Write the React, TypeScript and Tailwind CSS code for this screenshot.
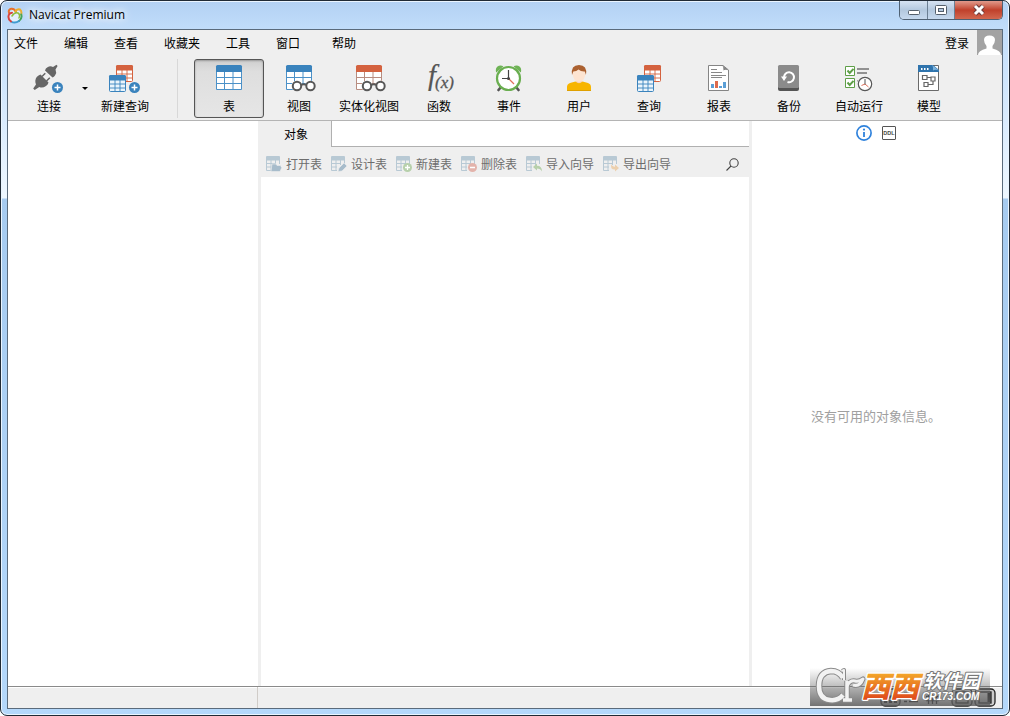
import React from 'react'

type ToolItem = {
    label: string
    icon: React.ReactNode
    active?: boolean
}

const menus = ['文件', '编辑', '查看', '收藏夹', '工具', '窗口', '帮助']

const BLUE = '#3a83bd'
const RED = '#d4623f'

/* ---------- toolbar icons ---------- */

const Icon = ({ children }: { children: React.ReactNode }) => (
    <svg width="32" height="28" viewBox="0 0 32 28" fill="none" aria-hidden="true" className="block overflow-visible">
        {children}
    </svg>
)

const BigTable = ({ color, line }: { color: string; line: string }) => (
    <g>
        <path d="M3.500 2.500V25.500H28.500V2.500Z" fill="#fff" stroke={line} />
        <path d="M11.500 8V26M20 8V26M3 13.500H29M3 19.500H29" stroke={line} />
        <path d="M3 8V2.500Q3 1 4.500 1H27.500Q29 1 29 2.500V8Z" fill={color} />
    </g>
)

const SmallTable = ({ x, y, color, fill = '#fff' }: { x: number; y: number; color: string; fill?: string }) => (
    <g transform={`translate(${x} ${y})`}>
        <rect x="0.500" y="0.500" width="16" height="16" rx="1" fill={fill} stroke={color} />
        <path d="M6 5V17M11 5V17M0 9H17M0 13H17" stroke={color} strokeWidth="0.900" />
        <path d="M0 5.500V1.500Q0 0 1.500 0H15.500Q17 0 17 1.500V5.500Z" fill={color} />
    </g>
)

const PlusBadge = ({ x, y }: { x: number; y: number }) => (
    <g>
        <circle cx={x} cy={y} r="6" fill="#efefef" />
        <circle cx={x} cy={y} r="5.500" fill={BLUE} />
        <path d={`M${x - 3} ${y}H${x + 3}M${x} ${y - 3}V${y + 3}`} stroke="#fff" strokeWidth="1.500" />
    </g>
)

const Glasses = () => (
    <g>
        <path d="M10 20.500H31V26.500H10Z" fill="#efefef" />
        <circle cx="14" cy="22" r="5.500" fill="#efefef" />
        <circle cx="27.500" cy="22" r="5.500" fill="#efefef" />
        <circle cx="14" cy="22" r="4.200" fill="#fff" stroke="#585858" strokeWidth="2" />
        <circle cx="27.500" cy="22" r="4.200" fill="#fff" stroke="#585858" strokeWidth="2" />
        <path d="M18 21Q20.750 19.500 23.500 21" stroke="#585858" strokeWidth="1.800" />
    </g>
)

const ConnectIcon = () => (
    <Icon>
        <g fill="#666">
            <path d="M12 6.500Q12.500 4.300 14.500 3.200Q17.300 1.600 20 3L23.500 0.800L24.600 2L22.500 5.500Q24 8.500 22 11.500Q21 13 19.500 13.500Z" />
            <path d="M3.700 13Q5.500 11 7.500 10.500L15.500 18.500Q15 20.500 13 22Q9.500 24.500 6.300 23L1.700 26L0.200 24.500L3 20.500Q1.300 16.500 3.700 13Z" />
        </g>
        <path d="M9 12.500L12.300 9.200M13.500 17L16.800 13.700" stroke="#666" strokeWidth="1.500" />
        <PlusBadge x={24.5} y={23.5} />
    </Icon>
)

const NewQueryIcon = () => (
    <Icon>
        <SmallTable x={7} y={1} color={RED} />
        <SmallTable x={0} y={11} color={BLUE} fill="#eaf4fb" />
        <PlusBadge x={25.5} y={23.5} />
    </Icon>
)

const FunctionIcon = () => (
    <Icon>
        <g fill="#555" fontFamily="'Liberation Serif', serif" fontStyle="italic">
            <text x="5" y="21" fontSize="29" stroke="#555" strokeWidth="0.200">f</text>
            <text x="12" y="24" fontSize="17" stroke="#555" strokeWidth="0.300">(x)</text>
        </g>
    </Icon>
)

const EventIcon = () => (
    <Icon>
        <path d="M8 23L5.500 26M23 23L25.500 26" stroke="#555" strokeWidth="2.600" strokeLinecap="round" />
        <path d="M3.200 8.500Q2 4.500 4.500 2.500Q7 0.500 10.500 2.200ZM27.800 8.500Q29 4.500 26.500 2.500Q24 0.500 20.500 2.200Z" fill="#6eb355" />
        <circle cx="15.500" cy="14.500" r="11.500" fill="#fff" stroke="#6aae50" strokeWidth="2.200" />
        <path d="M15.500 14.500L21 20" stroke="#e2705a" strokeWidth="1.300" />
        <path d="M15.500 6V14.500H9" stroke="#444" strokeWidth="1.200" />
        <circle cx="15.500" cy="14.500" r="1.500" fill="#444" />
    </Icon>
)

const UserIcon = () => (
    <Icon>
        <path d="M13 14H19V19Q16 22 13 19Z" fill="#f6d3bb" />
        <path d="M4 27V23Q4 20 7 19L12.500 17.500Q16 21 19.500 17.500L25 19Q28 20 28 23V27Z" fill="#f7b500" />
        <path d="M4 26.500H28" stroke="#dfa000" />
        <path d="M9.500 6H22.500V10Q21.500 17.500 16 18Q10.500 17.500 9.500 10Z" fill="#fde4d1" />
        <path d="M9 11Q7.500 1 16 1Q24.500 1 23 11L21.800 7.500Q18 7.800 15.500 5.500Q13.500 7.500 10.300 7.500Z" fill="#ab6130" />
    </Icon>
)

const QueryIcon = () => (
    <Icon>
        <SmallTable x={11} y={1} color={RED} />
        <SmallTable x={4} y={11} color={BLUE} fill="#eaf4fb" />
    </Icon>
)

const ReportIcon = () => (
    <Icon>
        <path d="M5.500 1.500H20L25.500 6V26.500H5.500Z" fill="#fff" stroke="#858585" />
        <path d="M19 1L26 6.500Q22 4.800 20.500 6.500Q21 3 19 1Z" fill="#858585" />
        <path d="M8 5.500H14M8 8.500H19M8 11.500H23M8 13.500H19" stroke="#888" />
        <path d="M8 20H11V24H8ZM20 18H23V24H20ZM16 22H19V24H16Z" fill="#5b9fd6" />
        <path d="M12 17H15V24H12Z" fill="#dc6a4d" />
    </Icon>
)

const BackupIcon = () => (
    <Icon>
        <rect x="5" y="10" width="21" height="17" rx="2" fill="#555" />
        <rect x="5" y="1" width="21" height="23" rx="1.500" fill="#8b8b8b" />
        <path d="M11 13.500A5 5 0 1 1 14.500 18" stroke="#fff" strokeWidth="2" />
        <path d="M8 12.500H14L11 17Z" fill="#fff" />
    </Icon>
)

const AutomationIcon = () => (
    <Icon>
        <path d="M2.500 2.500H11.500V11.500H2.500ZM2.500 14.500H11.500V23.500H2.500Z" fill="#fff" stroke="#5f9f48" />
        <path d="M4.500 6.500L6.700 9L10.500 4.800M4.500 18.500L6.700 21L10.500 16.800" stroke="#5f9f48" strokeWidth="2" />
        <path d="M14 5H26M14 9H24M14 17H18" stroke="#929292" strokeWidth="2" />
        <circle cx="22" cy="20" r="8" fill="#efefef" />
        <circle cx="22" cy="20" r="6.700" fill="#fff" stroke="#585858" strokeWidth="1.200" />
        <path d="M22 20L25.500 23M22 20L18.500 21.500" stroke="#e2705a" />
        <path d="M22 15V20.500" stroke="#555" />
    </Icon>
)

const ModelIcon = () => (
    <Icon>
        <path d="M5.500 1.500H25.500V26.500H5.500Z" fill="#fff" stroke="#6a6a6a" />
        <path d="M5 1H20L26 6V8H5Z" fill="#2f74ad" />
        <path d="M19 1L26 6.500Q22 4.800 20 6.500Q20.800 3 19 1Z" fill="#7db4de" />
        <path d="M8 4H9.500V6H8ZM11 4H12.500V6H11ZM14 4H15.500V6H14Z" fill="#fff" />
        <path d="M9.500 11.500H14V15.500H9.500ZM18 13H22V17H18ZM11 18.500H15V22.500H11Z" stroke="#666" strokeWidth="1.200" />
        <path d="M14 13.500H18M20 17V20.500H15" stroke="#666" strokeWidth="1.200" />
    </Icon>
)

const tools: ToolItem[] = [
    { label: '表', icon: <Icon><BigTable color={BLUE} line="#4b91c8" /></Icon>, active: true },
    { label: '视图', icon: <Icon><BigTable color={BLUE} line="#4b91c8" /><Glasses /></Icon> },
    { label: '实体化视图', icon: <Icon><BigTable color={RED} line="#b88d80" /><Glasses /></Icon> },
    { label: '函数', icon: <FunctionIcon /> },
    { label: '事件', icon: <EventIcon /> },
    { label: '用户', icon: <UserIcon /> },
    { label: '查询', icon: <QueryIcon /> },
    { label: '报表', icon: <ReportIcon /> },
    { label: '备份', icon: <BackupIcon /> },
    { label: '自动运行', icon: <AutomationIcon /> },
    { label: '模型', icon: <ModelIcon /> },
]

const ToolButton = ({ label, icon, active }: ToolItem) => (
    <button
        className={`flex w-[70px] shrink-0 flex-col items-center gap-1.5 rounded-[3px] border pt-1 pb-[3px] leading-4 whitespace-nowrap ${
            active
                ? 'border-[#555] bg-linear-to-b from-[#cfcfcf] via-[#dedede] via-20% to-[#e6e6e6] shadow-[inset_0_1px_2px_#999]'
                : 'border-transparent'
        }`}
    >
        {icon}
        <span>{label}</span>
    </button>
)

/* ---------- object bar (disabled actions) ---------- */

const actions = [
    {
        label: '打开表',
        badge: <path d="M6 8H10L11 9.500H15V11H16L14 15.500H5Z" fill="#a7bccb" stroke="#efefef" strokeWidth="0.600" />,
    },
    {
        label: '设计表',
        badge: <path d="M7 15.500L8 12L13 7L16 10L11 15Z" fill="#a7bccb" stroke="#efefef" strokeWidth="0.600" />,
    },
    {
        label: '新建表',
        badge: (
            <>
                <circle cx="11.500" cy="11.500" r="4.500" fill="#b7d0ab" />
                <path d="M9 11.500H14M11.500 9V14" stroke="#fff" strokeWidth="1.300" />
            </>
        ),
    },
    {
        label: '删除表',
        badge: (
            <>
                <circle cx="11.500" cy="11.500" r="4.500" fill="#e3b3ab" />
                <path d="M9 11.500H14" stroke="#fff" strokeWidth="1.300" />
            </>
        ),
    },
    {
        label: '导入向导',
        badge: <path d="M7 11L11 7.500V9.700Q16 9.700 16 15.500Q14.500 12.500 11 12.500V14.500Z" fill="#b7d0ab" />,
    },
    {
        label: '导出向导',
        badge: <path d="M16 12L12 8.500V10.700Q9 10.700 8.500 8Q6.500 13.500 12 13.500V15.500Z" fill="#ecd0ae" />,
    },
]

const ActionIcon = ({ children }: { children: React.ReactNode }) => (
    <svg width="16" height="16" viewBox="0 0 16 16" fill="none" aria-hidden="true" className="shrink-0">
        <path d="M0.500 1V14.500H6M13.500 1V8M0 7.500H9M0 11H6M5 4V15M9.500 4V9" stroke="#b8c9d4" />
        <path d="M0 4.500V1Q0 0 1 0H13Q14 0 14 1V4.500Z" fill="#b8c9d4" />
        {children}
    </svg>
)

/* ---------- window frame ---------- */

const TitleBar = () => (
    <header className="flex h-[29px] shrink-0 items-start justify-between">
        <div className="flex h-[28px] items-center gap-1.5">
            <svg width="16" height="17" viewBox="0 0 16 17" fill="none" strokeWidth="2" strokeLinecap="round" aria-hidden="true">
                <circle cx="8" cy="9" r="6.500" fill="#fff" fillOpacity="0.600" />
                <path d="M2 6Q1 2.500 4.200 1.800Q7.500 1.400 9 5" stroke="#e8722c" />
                <path d="M8.500 4.500Q10 1.300 13 2.500Q15 4 14.200 7.500" stroke="#ecae2c" />
                <path d="M14.200 7.500Q15.500 11.500 12 14" stroke="#43a457" />
                <path d="M12 14Q8 16.800 4 14.500" stroke="#3f9bd0" />
                <path d="M4 14.500Q0.500 12 1.800 8Q2.500 6 5 5.800" stroke="#d8433d" />
                <path d="M5 9Q7.500 5 11 6Q13.500 7.500 12 11" stroke="#8ebd3d" strokeWidth="1.500" />
            </svg>
            <h1 className="font-['Open_Sans','Noto_Sans',sans-serif] text-[12px] leading-4 text-black [text-shadow:0_0_6px_#fff,0_0_10px_#fff,0_0_14px_#fff]">
                Navicat Premium
            </h1>
        </div>
        <div className="flex h-[19px] overflow-hidden rounded-b-[5px] border border-t-0 border-[#4f6173]">
            <button aria-label="最小化" className="flex w-7 items-center justify-center border-r border-[#6b7f93] bg-linear-to-b from-[#d6e3f2] via-[#b3c8de] via-50% to-[#c6d9ee]">
                <svg width="12" height="12" viewBox="0 0 12 12" aria-hidden="true">
                    <rect x="0.500" y="6.500" width="11" height="4" rx="1" fill="#fff" stroke="#55606c" />
                </svg>
            </button>
            <button aria-label="最大化" className="flex w-[27px] items-center justify-center border-r border-[#6b7f93] bg-linear-to-b from-[#d6e3f2] via-[#b3c8de] via-50% to-[#c6d9ee]">
                <svg width="12" height="11" viewBox="0 0 12 11" aria-hidden="true">
                    <rect x="0.500" y="0.500" width="11" height="9" rx="1" fill="#fff" stroke="#55606c" />
                    <rect x="3.500" y="3.500" width="5" height="3" fill="#b3c8de" stroke="#55606c" />
                </svg>
            </button>
            <button aria-label="关闭" className="flex w-[47px] items-center justify-center bg-linear-to-b from-[#e0998b] via-[#c0402b] via-50% to-[#d2674f]">
                <svg width="14" height="12" viewBox="0 0 14 12" fill="none" aria-hidden="true">
                    <path d="M3 2L11 10M11 2L3 10" stroke="#6b3a3a" strokeWidth="5" />
                    <path d="M3 2L11 10M11 2L3 10" stroke="#fff" strokeWidth="3" />
                </svg>
            </button>
        </div>
    </header>
)

const MenuBar = () => (
    <div className="flex h-[27px] shrink-0 items-start justify-between">
        <nav className="flex h-[26px] items-center gap-[26px] pl-1.5">
            {menus.map((menu) => (
                <button key={menu} className="leading-4 last:ml-1.5">{menu}</button>
            ))}
        </nav>
        <div className="flex items-center gap-2">
            <button className="leading-4">登录</button>
            <svg width="25" height="25" viewBox="0 0 25 25" aria-hidden="true">
                <path d="M0 0H25V25H0Z" fill="#a3a3a3" />
                <path d="M1 25Q1 20.500 9.500 18.500V16Q7 13 7 10Q7 5.500 12.500 5.500Q18 5.500 18 10Q18 13 15.500 16V18.500Q24 20.500 24 25Z" fill="#fff" />
            </svg>
        </div>
    </div>
)

const ToolBar = () => (
    <div className="flex shrink-0 items-stretch border-b border-[#b4b4b4] pt-0.5 pb-0.5 pl-1.5">
        <ToolButton label="连接" icon={<ConnectIcon />} />
        <button aria-label="连接类型" className="-ml-1 flex w-2.5 items-center justify-center">
            <svg width="6" height="3" viewBox="0 0 6 3" aria-hidden="true">
                <path d="M0 0H6L3 3Z" fill="#000" />
            </svg>
        </button>
        <ToolButton label="新建查询" icon={<NewQueryIcon />} />
        <div className="mr-4 ml-[17px] w-px bg-[#d8d8d8]" />
        {tools.map((tool) => (
            <ToolButton key={tool.label} {...tool} />
        ))}
    </div>
)

const ObjectPane = () => (
    <section className="flex min-w-0 flex-1 flex-col bg-white">
        <div className="flex h-[26px] shrink-0">
            <button className="w-[70px] bg-[#efefef]">对象</button>
            <div className="flex-1 border-b border-l border-[#b0b0b0]" />
        </div>
        <div className="flex h-[30px] shrink-0 items-center justify-between bg-[#efefef] pr-2.5 pl-[5px]">
            <div className="flex gap-[9px] pt-1">
                {actions.map((action) => (
                    <button key={action.label} disabled className="flex items-center gap-1 leading-4 whitespace-nowrap text-[#6d6d6d]">
                        <ActionIcon>{action.badge}</ActionIcon>
                        {action.label}
                    </button>
                ))}
            </div>
            <button aria-label="搜索" className="pt-1">
                <svg width="13" height="13" viewBox="0 0 13 13" fill="none" stroke="#444" strokeWidth="1.100" aria-hidden="true" className="block">
                    <circle cx="8" cy="5" r="4.200" />
                    <path d="M5 8L0.500 12.500" />
                </svg>
            </button>
        </div>
    </section>
)

const InfoPane = () => (
    <aside className="flex w-[250px] shrink-0 flex-col bg-white">
        <div className="flex h-6 shrink-0 items-center justify-center gap-2.5 pr-0.5">
            <button aria-label="信息">
                <svg width="16" height="16" viewBox="0 0 16 16" fill="none" aria-hidden="true" className="block">
                    <circle cx="8" cy="8" r="7.100" stroke="#2f82dc" strokeWidth="1.700" />
                    <path d="M8 7V12" stroke="#2f82dc" strokeWidth="1.800" />
                    <circle cx="8" cy="4.600" r="1.100" fill="#2f82dc" />
                </svg>
            </button>
            <button aria-label="DDL">
                <svg width="14" height="14" viewBox="0 0 14 14" fill="none" aria-hidden="true" className="block">
                    <rect x="0.500" y="0.500" width="13" height="13" rx="0.500" stroke="#555" />
                    <text x="7" y="9" textAnchor="middle" fontFamily="'Liberation Sans', sans-serif" fontWeight="700" fontSize="5.500" fill="#444">DDL</text>
                </svg>
            </button>
        </div>
        <p className="flex flex-1 items-center justify-center pr-0.5 text-[13px] leading-5 text-[#a0a0a0]">没有可用的对象信息。</p>
    </aside>
)

const StatusBar = () => (
    <footer className="flex h-[22px] shrink-0 border-t border-[#8a8a8a] bg-[#efefef] shadow-[inset_0_1px_0_#fff]">
        <div className="w-[250px] border-r border-[#d0ccc8]" />
        <div className="flex flex-1 items-center justify-end pr-1.5">
            <svg width="116" height="19" viewBox="0 0 116 19" fill="none" stroke="#222" strokeWidth="1.300" aria-hidden="true">
                <rect x="1" y="1" width="19" height="17" rx="4" fill="#ccc" />
                <path d="M4 9H17M4 13.500H17" strokeWidth="3" strokeDasharray="3 2" />
                <path d="M24 5.500H27M29 5.500H38M24 9.500H27M29 9.500H38M24 13.500H27M29 13.500H38" />
                <path d="M46 8.500H59M46 12.500H59M48.500 5V16M52.500 5V16M56.500 5V16" />
                <rect x="72" y="1" width="20" height="17" rx="4" fill="#ccc" />
                <rect x="76" y="4" width="12" height="11" />
                <rect x="95" y="1" width="20" height="17" rx="4" fill="#ccc" />
                <rect x="99" y="4" width="12" height="11" />
                <path d="M109 5V14" strokeWidth="3" />
            </svg>
        </div>
    </footer>
)

const SiteBadge = () => (
    <svg
        width="180"
        height="38"
        viewBox="0 0 180 38"
        className="pointer-events-none absolute right-[19px] bottom-[9px] overflow-visible"
        role="img"
        aria-label="西西软件园"
    >
        <defs>
            <linearGradient id="shade" x1="0" y1="0" x2="0" y2="1">
                <stop offset="0" stopColor="#666" stopOpacity="0" />
                <stop offset="1" stopColor="#5c5c5c" stopOpacity="0.850" />
            </linearGradient>
            <linearGradient id="flame" x1="0" y1="0" x2="0" y2="1">
                <stop offset="0.200" stopColor="#f5ae2a" />
                <stop offset="0.850" stopColor="#df4c1c" />
            </linearGradient>
        </defs>
        <rect width="180" height="38" fill="url(#shade)" />
        {[
            { stroke: '#8b8b8b', extra: 2 },
            { stroke: '#f2f2f2', extra: 0 },
        ].map(({ stroke, extra }) => (
            <g key={stroke} fill="none" stroke={stroke} strokeLinejoin="round">
                <path d="M33 10Q29 3 21 3Q9 4 9 18Q9 31 20 32Q28 33 33 27" strokeWidth={4.5 + extra} />
                <path d="M32 3L34 2V12" strokeWidth={2 + extra} />
                <path d="M37 13V31M33 32H42" strokeWidth={3.5 + extra} />
                <path d="M37 18Q40 12 45 13Q49 14 53 11Q50 19 43 17" strokeWidth={3 + extra} />
            </g>
        ))}
        <g fontFamily="'Noto Sans CJK SC', sans-serif" fontStyle="italic" paintOrder="stroke" strokeLinejoin="round">
            <text x="51" y="29" fontSize="29" fontWeight="900" fill="url(#flame)" stroke="#fff" strokeWidth="2.500">西西</text>
            <text x="113" y="20" fontSize="19" fontWeight="700" fill="#fff" stroke="#777" strokeWidth="2">软件园</text>
            <text x="112" y="32" fontSize="10" fontWeight="700" fill="#fff" stroke="#777" strokeWidth="1.500" fontFamily="'Liberation Sans', sans-serif">CR173.COM</text>
        </g>
    </svg>
)

const App = () => {
    return (
        <div className="relative flex h-screen flex-col overflow-hidden rounded-[7px] border border-[#202a35] bg-linear-[to_bottom,#b3d1f3_0px,#c2defb_30px,#eef7ff_197px,#a6cbf0_198px,#b4d8fb_100%] px-1.5 pb-1.5 font-['Noto_Sans_CJK_SC',sans-serif] text-[12px] text-black shadow-[inset_0_0_0_1px_#eaf5ff]">
            <TitleBar />
            <div className="-mt-px flex min-h-0 flex-1 flex-col border border-[#5a6b7c] bg-[#efefef]">
                <MenuBar />
                <ToolBar />
                <main className="flex min-h-0 flex-1">
                    <aside className="w-[250px] shrink-0 bg-white" />
                    <div className="w-[3px] shrink-0 bg-[#efefef]" />
                    <ObjectPane />
                    <div className="w-[3px] shrink-0 bg-[#efefef]" />
                    <InfoPane />
                </main>
                <StatusBar />
            </div>
            <SiteBadge />
        </div>
    )
}

export default App
